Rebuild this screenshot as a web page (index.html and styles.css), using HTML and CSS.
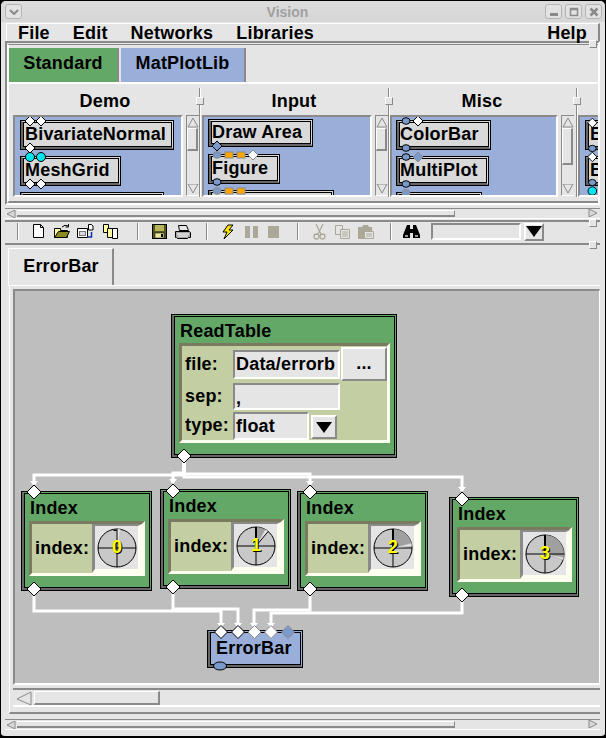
FILE: index.html
```html
<!DOCTYPE html>
<html lang="en">
<head>
    <meta charset="UTF-8">
    <title>Vision</title>
    <link rel="stylesheet" href="styles.css">
</head>
<body>
<svg class="defs" width="0" height="0">
    <defs>
        <polygon id="dia5" points="0,-5 5,0 0,5 -5,0"/>
        <polygon id="dia6" points="0,-6.5 6.5,0 0,6.5 -6.5,0"/>
        <polygon id="dia7" points="0,-7 7,0 0,7 -7,0"/>
        <ellipse id="oval" rx="4" ry="3.300"/>
        <ellipse id="oval-big" rx="6.500" ry="4"/>
        <circle id="dot" r="4.5"/>
        <rect id="sq" x="-4" y="-3" width="8" height="6"/>
        <polygon id="up" points="6,1 11,10 1,10"/>
        <polygon id="down" points="6,9 11,0 1,0"/>
    </defs>
</svg>
<div class="window">
    <div class="titlebar">
        <span class="tb-btn tb-menu"><svg width="10" height="6"><path d="M1 1l4 4 4-4" fill="none" stroke="#8a8a8a" stroke-width="2"/></svg></span>
        <span class="title">Vision</span>
        <span class="tb-btn"><svg width="10" height="8"><rect x="1" y="5" width="8" height="3" fill="#8a8a8a"/></svg></span>
        <span class="tb-btn"><svg width="10" height="10"><path d="M1.5 1.5h7v7h-7z M1 2.5h8" fill="none" stroke="#8a8a8a" stroke-width="1.5"/></svg></span>
        <span class="tb-btn"><svg width="10" height="10"><path d="M1.5 1.5l7 7m0-7l-7 7" stroke="#8a8a8a" stroke-width="2.5"/></svg></span>
    </div>
    <div class="main">
        <div class="menubar">
            <span>File</span>
            <span>Edit</span>
            <span>Networks</span>
            <span>Libraries</span>
            <span class="menu-help">Help</span>
        </div>

        <div class="pane-top">
            <div class="libbook">
                <div class="libtabs">
                    <div class="libtab tab-std">Standard</div>
                    <div class="libtab tab-mpl">MatPlotLib</div>
                </div>
                <div class="palette">
                    <div class="col col1">
                        <div class="col-head">Demo</div>
                        <div class="col-row">
                            <div class="plist plist1">
                                <div class="pnode pn-a"><div class="pn-mid"><div class="pn-in">BivariateNormal</div></div></div>
                                <div class="pnode pn-b"><div class="pn-mid"><div class="pn-in">MeshGrid</div></div></div>
                                <div class="pnode pn-c"><div class="pn-mid"><div class="pn-in"></div></div></div>
                                <svg class="ports" viewBox="15 117 166 78">
                                    <use href="#dia5" x="30" y="121" class="p-white"/>
                                    <use href="#dia5" x="41" y="121" class="p-white"/>
                                    <use href="#dia5" x="30" y="148" class="p-white"/>
                                    <use href="#dot" x="30" y="157" class="p-cyan"/>
                                    <use href="#dot" x="41" y="157" class="p-cyan"/>
                                    <use href="#dia5" x="30" y="184" class="p-white"/>
                                    <use href="#dia5" x="41" y="184" class="p-white"/>
                                </svg>
                            </div>
                            <div class="vsb">
                                <svg class="vsb-arrow" width="12" height="11"><use href="#up" class="sb-tri"/></svg>
                                <div class="vsb-thumb"></div>
                                <svg class="vsb-arrow vsb-down" width="12" height="11"><use href="#down" class="sb-tri"/></svg>
                            </div>
                        </div>
                        <div class="vsash"><span class="vsash-grip"></span></div>
                    </div>
                    <div class="col col2">
                        <div class="col-head">Input</div>
                        <div class="col-row">
                            <div class="plist plist2">
                                <div class="pnode pn-d"><div class="pn-mid"><div class="pn-in">Draw Area</div></div></div>
                                <div class="pnode pn-e"><div class="pn-mid"><div class="pn-in">Figure</div></div></div>
                                <div class="pnode pn-f"><div class="pn-mid"><div class="pn-in"></div></div></div>
                                <svg class="ports" viewBox="204 117 166 78">
                                    <use href="#dia5" x="217" y="146" class="p-blue"/>
                                    <use href="#oval" x="217" y="155" class="p-blue p-soft"/>
                                    <use href="#sq" x="229" y="155" class="p-orange p-soft"/>
                                    <use href="#sq" x="241" y="155" class="p-orange p-soft"/>
                                    <use href="#dia5" x="253" y="155" class="p-white p-soft"/>
                                    <use href="#oval" x="217" y="182" class="p-blue"/>
                                    <use href="#oval" x="217" y="191" class="p-blue p-soft"/>
                                    <use href="#sq" x="229" y="191" class="p-orange p-soft"/>
                                    <use href="#sq" x="241" y="191" class="p-orange p-soft"/>
                                </svg>
                            </div>
                            <div class="vsb">
                                <svg class="vsb-arrow" width="12" height="11"><use href="#up" class="sb-tri"/></svg>
                                <div class="vsb-thumb"></div>
                                <svg class="vsb-arrow vsb-down" width="12" height="11"><use href="#down" class="sb-tri"/></svg>
                            </div>
                        </div>
                        <div class="vsash"><span class="vsash-grip"></span></div>
                    </div>
                    <div class="col col3">
                        <div class="col-head">Misc</div>
                        <div class="col-row">
                            <div class="plist plist3">
                                <div class="pnode pn-g"><div class="pn-mid"><div class="pn-in">ColorBar</div></div></div>
                                <div class="pnode pn-h"><div class="pn-mid"><div class="pn-in">MultiPlot</div></div></div>
                                <div class="pnode pn-i"><div class="pn-mid"><div class="pn-in"></div></div></div>
                                <svg class="ports" viewBox="392 117 164 78">
                                    <use href="#oval" x="406" y="121" class="p-blue"/>
                                    <use href="#dia5" x="418" y="121" class="p-white"/>
                                    <use href="#oval" x="406" y="148" class="p-blue"/>
                                    <use href="#oval" x="406" y="157" class="p-blue"/>
                                    <use href="#dia5" x="418" y="157" class="p-blue p-soft"/>
                                    <use href="#oval" x="406" y="184" class="p-blue"/>
                                    <use href="#oval" x="406" y="193" class="p-blue p-soft"/>
                                </svg>
                            </div>
                            <div class="vsb vsb-long">
                                <svg class="vsb-arrow" width="12" height="11"><use href="#up" class="sb-tri"/></svg>
                                <div class="vsb-thumb"></div>
                                <svg class="vsb-arrow vsb-down" width="12" height="11"><use href="#down" class="sb-tri"/></svg>
                            </div>
                        </div>
                        <div class="vsash"><span class="vsash-grip"></span></div>
                    </div>
                    <div class="col col4">
                        <div class="col-head"></div>
                        <div class="col-row">
                            <div class="plist plist4">
                                <div class="pnode pn-j"><div class="pn-mid"><div class="pn-in">B</div></div></div>
                                <div class="pnode pn-k"><div class="pn-mid"><div class="pn-in">B</div></div></div>
                                <svg class="ports" viewBox="580 117 19 78">
                                    <use href="#dia5" x="593" y="121" class="p-white"/>
                                    <use href="#oval" x="593" y="148" class="p-blue"/>
                                    <use href="#dia5" x="593" y="157" class="p-white"/>
                                    <use href="#oval" x="593" y="184" class="p-blue"/>
                                    <use href="#dot" x="593" y="193" class="p-cyan"/>
                                </svg>
                            </div>
                        </div>
                    </div>
                </div>
            </div>
        </div>

        <div class="hsb hsb-top">
            <svg class="hsb-arrow" width="10" height="8"><path d="M1 4l8-4v8z" fill="#d9d9d9" stroke="#8a8a8a"/></svg>
            <div class="hsb-thumb"></div>
            <svg class="hsb-arrow hsb-end" width="10" height="8"><path d="M9 4l-8 4v-8z" fill="#d9d9d9" stroke="#8a8a8a"/></svg>
        </div>
        <div class="hsash"></div>

        <div class="toolbar">
            <span class="sep sep-first"></span>
            <svg class="tool" width="23" height="20"><path d="M6.5 2.5h7l3 3v10h-10z" fill="#fff" stroke="#000"/><path d="M13.5 2.5v3h3" fill="none" stroke="#000"/></svg>
            <svg class="tool" width="23" height="20"><path d="M4.5 15.5v-9h6v2h7v7z" fill="#ffffa0" stroke="#000"/><path d="M4.5 15.5l4-6h11l-3 6z" fill="#8a8a20" stroke="#000"/><path d="M12 5q3-3 6-1" fill="none" stroke="#000"/><path d="M18.5 2v3h-3" fill="none" stroke="#000"/></svg>
            <svg class="tool" width="23" height="20"><path d="M4.5 6.5h10v9h-10z" fill="#fff" stroke="#000"/><rect x="6.5" y="9.5" width="6" height="4" fill="#d9d9d9" stroke="#777"/><path d="M15.5 2.5h3l1.500 1.500v4h-4.500z" fill="#fff" stroke="#000"/><path d="M18.500 10v5h-4" fill="none" stroke="#1030a0" stroke-width="1.500"/></svg>
            <svg class="tool tool-wide" width="23" height="20"><path d="M4.500 2.500h5v8h-5z" fill="#ffffa0" stroke="#000"/><path d="M8.500 6.500h5v9h-5z" fill="#ffffa0" stroke="#000"/><path d="M13.500 6.500h5v10h-5z" fill="#fff" stroke="#000"/></svg>
            <span class="sep sep-a"></span>
            <svg class="tool" width="23" height="20"><rect x="4.500" y="2.500" width="14" height="14" fill="#55551c" stroke="#000"/><rect x="7" y="3" width="9" height="6" fill="#b5b560"/><rect x="7" y="11" width="9" height="5" fill="#e8e8a0" stroke="#000" stroke-width=".5"/><rect x="13" y="12" width="2" height="3" fill="#000"/></svg>
            <svg class="tool" width="23" height="20"><path d="M7.500 3.500h8l2 5h-9z" fill="#e8e8e8" stroke="#000"/><path d="M4.500 9.500h14l1 1v5h-2l-1 1h-10l-1-1h-1z" fill="#a8a8a8" stroke="#000"/><path d="M6 12h12M7 14h10" stroke="#fff"/></svg>
            <span class="sep sep-b"></span>
            <svg class="tool" width="23" height="20"><path d="M12 3h5l-4 5h4l-9 9 3-7h-4z" fill="#ffe600" stroke="#000"/></svg>
            <svg class="tool" width="23" height="20"><rect x="6" y="4" width="5" height="12" fill="#aca899"/><rect x="14" y="4" width="5" height="12" fill="#aca899"/></svg>
            <svg class="tool" width="23" height="20"><rect x="6" y="4" width="11" height="12" fill="#aca899"/></svg>
            <span class="sep sep-c"></span>
            <svg class="tool" width="23" height="20"><g fill="none" stroke="#aca899" stroke-width="1.300"><path d="M8 2l5 10M15 2l-5 10"/><circle cx="8.500" cy="14.500" r="2.500"/><circle cx="14.500" cy="14.500" r="2.500"/></g></svg>
            <svg class="tool" width="23" height="20"><g fill="#e5e5e5" stroke="#aca899"><path d="M4.500 3.500h7v9h-7z"/><path d="M9.500 7.500h9v9h-9z"/><path d="M11 10h6M11 12h6M11 14h6"/></g></svg>
            <svg class="tool" width="23" height="20"><path d="M4 5h4l1-2h5l1 2h3v12h-14z" fill="#aca899"/><path d="M10.500 9.500h9v7h-9z" fill="#e5e5e5" stroke="#aca899"/><path d="M12 12h6M12 14h6" stroke="#aca899"/></svg>
            <span class="sep sep-d"></span>
            <svg class="tool" width="23" height="20"><path d="M7 3h3v4h3v-4h3l4 10v3h-7v-5h-3v5h-7v-3z" fill="#000"/><rect x="5" y="13" width="3" height="2" fill="#9a9a9a"/><rect x="15" y="13" width="3" height="2" fill="#9a9a9a"/></svg>
            <div class="tool-entry"></div>
            <div class="arrow-btn tool-arrow"><span class="tri"></span></div>
        </div>

        <div class="nb">
            <div class="nb-tabs">
                <div class="nb-tab">ErrorBar</div>
            </div>
            <div class="nb-body">
                <div class="canvas">
                    <div class="node n-read">
                        <div class="node-mid"><div class="node-body">
                            <div class="node-title">ReadTable</div>
                            <div class="panel read-grid">
                                <span class="lbl">file:</span>
                                <div class="entry e-file">Data/errorb</div>
                                <div class="dots-btn">...</div>
                                <span class="lbl">sep:</span>
                                <div class="entry e-sep">,</div>
                                <span></span>
                                <span class="lbl">type:</span>
                                <div class="combo">
                                    <div class="entry e-type">float</div>
                                    <div class="arrow-btn"><span class="tri"></span></div>
                                </div>
                            </div>
                        </div></div>
                    </div>

                    <div class="node n-i0">
                        <div class="node-mid"><div class="node-body">
                            <div class="node-title title-index">Index</div>
                            <div class="panel index-row">
                                <span class="lbl lbl-index">index:</span>
                                <div class="dial-wrap"><div class="dial">
                                    <svg width="43" height="43"><circle cx="22" cy="22" r="19" fill="#c8c8c8" stroke="#000"/><path d="M22 22V3L25.300 3.300z" fill="#e2e2e2"/><path d="M22 3v38M3 22h38" stroke="#000"/><path d="M18.500 4.500h3" stroke="#000"/></svg>
                                    <span class="dial-num">0</span>
                                </div></div>
                            </div>
                        </div></div>
                    </div>

                    <div class="node n-i1">
                        <div class="node-mid"><div class="node-body">
                            <div class="node-title title-index">Index</div>
                            <div class="panel index-row">
                                <span class="lbl lbl-index">index:</span>
                                <div class="dial-wrap"><div class="dial">
                                    <svg width="43" height="43"><circle cx="22" cy="22" r="19" fill="#c8c8c8" stroke="#000"/><path d="M22 22V3A19 19 0 0 1 31.500 5.500z" fill="#a0a0a0"/><path d="M22 22L31.500 5.500 34.200 7.400z" fill="#e2e2e2"/><path d="M22 3v38M3 22h38" stroke="#000"/><path d="M22 3v19" stroke="#000" stroke-width="2"/><path d="M22 22L34.200 7.400" stroke="#000"/></svg>
                                    <span class="dial-num">1</span>
                                </div></div>
                            </div>
                        </div></div>
                    </div>

                    <div class="node n-i2">
                        <div class="node-mid"><div class="node-body">
                            <div class="node-title title-index">Index</div>
                            <div class="panel index-row">
                                <span class="lbl lbl-index">index:</span>
                                <div class="dial-wrap"><div class="dial">
                                    <svg width="43" height="43"><circle cx="22" cy="22" r="19" fill="#c8c8c8" stroke="#000"/><path d="M22 22V3A19 19 0 0 1 40.400 17.100L22 22z" fill="#a0a0a0"/><path d="M3 22h38M22 3v38" stroke="#000"/><path d="M22 3v19" stroke="#000" stroke-width="2"/><path d="M22 22L40.400 17.100 41 20.300z" fill="#e2e2e2" stroke="#999" stroke-width=".5"/></svg>
                                    <span class="dial-num">2</span>
                                </div></div>
                            </div>
                        </div></div>
                    </div>

                    <div class="node n-i3">
                        <div class="node-mid"><div class="node-body">
                            <div class="node-title title-index">Index</div>
                            <div class="panel index-row">
                                <span class="lbl lbl-index">index:</span>
                                <div class="dial-wrap"><div class="dial">
                                    <svg width="43" height="43"><circle cx="22" cy="22" r="19" fill="#c8c8c8" stroke="#000"/><path d="M22 22V3A19 19 0 0 1 40.700 25.300L22 22z" fill="#a0a0a0"/><path d="M3 22h38M22 3v38" stroke="#000"/><path d="M22 3v19" stroke="#000" stroke-width="2"/><path d="M22 22L40.700 25.300 40.100 27.900z" fill="#e2e2e2" stroke="#999" stroke-width=".5"/></svg>
                                    <span class="dial-num">3</span>
                                </div></div>
                            </div>
                        </div></div>
                    </div>

                    <div class="node n-err">
                        <div class="node-mid"><div class="node-body err-body">ErrorBar</div></div>
                    </div>

                    <!-- wires and ports over the nodes, page coordinates -->
                    <svg class="net" viewBox="15 291 585 393">
                        <g class="wires">
                            <path d="M184 456V475H34V485"/>
                            <path d="M184 456V473H173V483"/>
                            <path d="M184 456V474H310V485"/>
                            <path d="M184 456V477H462V491"/>
                            <path d="M34 591V611H221V626"/>
                            <path d="M173 589V609H238V626"/>
                            <path d="M310 591V610H254V626"/>
                            <path d="M462 597V613H271V626"/>
                        </g>
                        <g class="arrows">
                            <polygon points="30,481 38,481 34,486"/>
                            <polygon points="169,479 177,479 173,484"/>
                            <polygon points="306,481 314,481 310,486"/>
                            <polygon points="458,487 466,487 462,492"/>
                            <polygon points="217,623 225,623 221,628"/>
                            <polygon points="234,623 242,623 238,628"/>
                            <polygon points="250,623 258,623 254,628"/>
                            <polygon points="267,623 275,623 271,628"/>
                        </g>
                        <use href="#dia7" x="184" y="456" class="p-white"/>
                        <use href="#dia7" x="34" y="492" class="p-white"/>
                        <use href="#dia7" x="173" y="491" class="p-white"/>
                        <use href="#dia7" x="310" y="492" class="p-white"/>
                        <use href="#dia7" x="462" y="499" class="p-white"/>
                        <use href="#dia7" x="34" y="589" class="p-white"/>
                        <use href="#dia7" x="173" y="587" class="p-white"/>
                        <use href="#dia7" x="310" y="589" class="p-white"/>
                        <use href="#dia7" x="462" y="595" class="p-white"/>
                        <use href="#dia6" x="221" y="632" class="p-white"/>
                        <use href="#dia6" x="238" y="632" class="p-white"/>
                        <use href="#dia6" x="254.500" y="632" class="p-white p-soft"/>
                        <use href="#dia6" x="271" y="632" class="p-white p-soft"/>
                        <use href="#dia6" x="288" y="632" class="p-blue p-soft"/>
                        <use href="#oval-big" x="220" y="666" class="p-blue"/>
                    </svg>
                </div>
                <div class="nb-hsb">
                    <svg class="nb-hsb-arrow" width="16" height="15"><path d="M1 8L15 1V14z" fill="#e5e5e5" stroke="#8a8a8a"/></svg>
                    <div class="nb-hsb-thumb"></div>
                </div>
            </div>
        </div>

        <div class="hsb hsb-bottom">
            <svg class="hsb-arrow" width="10" height="8"><path d="M1 4l8-4v8z" fill="#d9d9d9" stroke="#8a8a8a"/></svg>
            <div class="hsb-thumb"></div>
            <svg class="hsb-arrow hsb-end" width="10" height="8"><path d="M9 4l-8 4v-8z" fill="#d9d9d9" stroke="#8a8a8a"/></svg>
        </div>

        <span class="grip grip-1"></span>
        <span class="grip grip-2"></span>
        <span class="grip grip-3"></span>
    </div>
</div>
</body>
</html>
```

FILE: styles.css
```css
body {
    margin: 0;
    font-family: "Liberation Sans", Arial, sans-serif;
    font-weight: bold;
    font-size: 18px;
    letter-spacing: .2px;
    color: #000;
    background-color: #000;
}
.defs { position: absolute; }

.window {
    box-sizing: border-box;
    width: 606px;
    height: 738px;
    border: 1px solid #000;
    border-bottom-width: 2px;
    border-radius: 6px 6px 5px 5px;
    background-color: #e5e5e5;
    overflow: hidden;
}

/* title bar */
.titlebar {
    display: flex;
    align-items: center;
    height: 21px;
    padding: 0 3px 0 4px;
    gap: 3px;
    background: linear-gradient(#dcdcdc, #d6d6d6);
}
.title {
    flex: 1;
    text-align: center;
    font-size: 14px;
    letter-spacing: 0;
    color: #a0a0a0;
    padding-left: 8px;
}
.tb-btn {
    display: flex;
    align-items: center;
    justify-content: center;
    box-sizing: border-box;
    width: 17px;
    height: 15px;
    border: 1px solid #b5b5b5;
    border-radius: 3px;
    background-color: #e2e2e2;
}

.main { position: relative; padding: 0 5px 0 4px; }

/* menu */
.menubar {
    box-sizing: border-box;
    display: flex;
    height: 18px;
    margin: 1px 0 0 1px;
    padding: 0 12px 0 0;
    border-top: 1px solid #fff;
    border-left: 1px solid #fff;
    border-right: 2px solid #8a8a8a;
    line-height: 18px;
}
.menubar span { padding: 0 12px 0 12px; margin-right: -1px; }
.menubar span:first-child { padding-left: 11px; }
.menubar .menu-help { margin-left: auto; padding: 0; }

/* library pane */
.pane-top {
    box-sizing: border-box;
    height: 164px;
    padding-top: 1px;
    border-top: 2px solid #8a8a8a;
    border-left: 2px solid #8a8a8a;
    border-right: 2px solid #fff;
    border-bottom: 2px solid #fff;
}
.libbook {
    box-sizing: border-box;
    height: 159px;
    padding-top: 3px;
    border-top: 1px solid #8a8a8a;
    border-left: 2px solid #fff;
    border-bottom: 2px solid #8a8a8a;
}
.libtabs {
    display: flex;
    gap: 2px;
    height: 34px;
    padding-left: 0;
    border-bottom: 2px solid #fff;
    margin-left: -1px;
}
.libtab {
    box-sizing: border-box;
    height: 34px;
    line-height: 31px;
    text-align: center;
    border-right: 2px solid #8a8a8a;
}
.tab-std { width: 110px; margin-left: 1px; background-color: #64a868; }
.tab-mpl { width: 125px; background-color: #99aed8; }

.palette { display: flex; height: 113px; }
.col { position: relative; box-sizing: border-box; }
.col1 { width: 191px; padding-left: 4px; }
.col2 { width: 189px; padding-left: 2px; }
.col3 { width: 188px; padding-left: 1px; }
.col4 { width: 21px; padding-left: 1px; }
.col-head {
    height: 31px;
    line-height: 35px;
    text-align: center;
    width: 184px;
}
.col-row { display: flex; height: 82px; }
.plist {
    position: relative;
    box-sizing: border-box;
    height: 82px;
    border-top: 2px solid #8a8a8a;
    border-left: 2px solid #8a8a8a;
    border-right: 2px solid #fff;
    border-bottom: 2px solid #fff;
    background-color: #99aed8;
    overflow: hidden;
}
.plist1 { width: 170px; }
.plist2 { width: 170px; }
.plist3 { width: 168px; }
.plist4 { width: 21px; border-right: none; }
.ports { position: absolute; left: 0; top: 0; width: 100%; height: 78px; }
.ports use, .net use { stroke: #000; stroke-width: 1; }
.p-white { fill: #fff; }
.p-cyan { fill: #00e5ee; }
.p-blue { fill: #7b9acc; }
.p-orange { fill: #ffa500; }
.net use.p-soft, .ports use.p-soft { stroke: #8a8a8a; }

.pnode {
    position: absolute;
    box-sizing: border-box;
    height: 30px;
    border: 1px solid #000;
    white-space: nowrap;
}
.pn-mid {
    box-sizing: border-box;
    height: 28px;
    border-style: solid;
    border-width: 1px 1px 2px 2px;
    border-color: #d9d9d9 #d9d9d9 #666 #666;
}
.pn-in {
    box-sizing: border-box;
    height: 25px;
    border: 1px solid #000;
    padding-left: 1px;
    line-height: 22px;
    background-color: #d9d9d9;
    overflow: hidden;
}
.plist2 .pn-in, .plist3 .pn-in { padding-left: 0; }
.pn-a { left: 5px; top: 3px; width: 154px; }
.pn-b { left: 5px; top: 39px; width: 101px; }
.pn-c { left: 5px; top: 75px; width: 144px; }
.pn-d { left: 4px; top: 2px; width: 105px; height: 28px; }
.pn-d .pn-mid { height: 26px; }
.pn-d .pn-in { height: 23px; line-height: 20px; }
.pn-e { left: 4px; top: 37px; width: 72px; }
.pn-f { left: 4px; top: 73px; width: 126px; }
.pn-g { left: 4px; top: 3px; width: 95px; }
.pn-h { left: 4px; top: 39px; width: 93px; }
.pn-i { left: 4px; top: 75px; width: 86px; }
.pn-j { left: 5px; top: 3px; width: 60px; }
.pn-k { left: 5px; top: 39px; width: 60px; }

/* vertical scrollbar of a palette column */
.vsb {
    box-sizing: border-box;
    width: 13px;
    height: 81px;
    margin-left: 3px;
    padding-top: 1px;
    border-top: 1px solid #8a8a8a;
    border-left: 1px solid #8a8a8a;
    border-bottom: 1px solid #fff;
}
.vsb-arrow { display: block; }
.vsb-thumb {
    box-sizing: border-box;
    width: 11px;
    height: 23px;
    border-right: 2px solid #8a8a8a;
    border-bottom: 2px solid #8a8a8a;
    border-top: 1px solid #fff;
    border-left: 1px solid #fff;
}
.vsb-long .vsb-thumb { height: 37px; }
.vsb-down { margin-top: 33px; }
.vsb-long .vsb-down { margin-top: 19px; }
.sb-tri { fill: #e5e5e5; stroke: #8a8a8a; }

.vsash {
    position: absolute;
    right: -1px;
    top: 4px;
    bottom: 0;
    width: 0;
    border-left: 1px solid #8a8a8a;
    border-right: 1px solid #fff;
}
.vsash-grip {
    position: absolute;
    left: -4px;
    top: 9px;
    box-sizing: border-box;
    width: 8px;
    height: 8px;
    background-color: #e5e5e5;
    border: 1px solid #8a8a8a;
    border-top-color: #fff;
    border-left-color: #fff;
}

/* horizontal scrollbars of the panes */
.hsb {
    position: relative;
    box-sizing: border-box;
    display: flex;
    align-items: center;
    height: 11px;
    margin-top: 3px;
    border-top: 1px solid #8a8a8a;
    border-bottom: 1px solid #fff;
}
.hsb-arrow { margin-left: 1px; }
.hsb-end { position: absolute; right: 2px; top: 0; }
.hsb-thumb {
    box-sizing: border-box;
    width: 438px;
    height: 7px;
    margin-left: 1px;
    border-bottom: 2px solid #8a8a8a;
    border-right: 1px solid #8a8a8a;
    border-top: 1px solid #fff;
}
.hsb-bottom { margin-top: 5px; }
.hsash { height: 3px; box-sizing: border-box; border-bottom: 2px solid #8a8a8a; }

.grip {
    position: absolute;
    left: 588px;
    box-sizing: border-box;
    width: 8px;
    height: 8px;
    background-color: #e5e5e5;
    border: 1px solid #8a8a8a;
    border-top-color: #fff;
    border-left-color: #fff;
}
.grip-1 { top: 17px; }
.grip-2 { top: 196px; }
.grip-3 { top: 218px; }

/* toolbar */
.toolbar {
    box-sizing: border-box;
    display: flex;
    align-items: center;
    height: 23px;
    padding: 0 0 2px 12px;
    border-bottom: 2px solid #8a8a8a;
}
.tool { display: block; flex: none; }
.tool-wide { margin-left: 3px; }
.sep {
    flex: none;
    width: 0;
    height: 17px;
    border-left: 1px solid #8a8a8a;
    border-right: 1px solid #fff;
}
.sep-first { margin-right: 8px; }
.sep-a { margin: 0 9px 0 15px; }
.sep-b { margin: 0 8px 0 12px; }
.sep-c { margin: 0 9px 0 12px; }
.sep-d { margin: 0 8px 0 13px; }
.tool-entry {
    box-sizing: border-box;
    width: 90px;
    height: 17px;
    margin-left: 8px;
    border-top: 2px solid #8a8a8a;
    border-left: 2px solid #8a8a8a;
    border-bottom: 2px solid #fff;
    border-right: 2px solid #fff;
}
.arrow-btn {
    box-sizing: border-box;
    display: flex;
    align-items: center;
    justify-content: center;
    width: 26px;
    height: 24px;
    background-color: #e5e5e5;
    border-top: 2px solid #fff;
    border-left: 2px solid #fff;
    border-right: 2px solid #8a8a8a;
    border-bottom: 2px solid #8a8a8a;
}
.tri {
    width: 0;
    height: 0;
    border-left: 8px solid transparent;
    border-right: 8px solid transparent;
    border-top: 11px solid #000;
}
.tool-arrow { width: 20px; height: 18px; margin-left: 3px; }

/* network notebook */
.nb { box-sizing: border-box; height: 469px; padding: 3px 0 0 3px; }
.nb-tabs { height: 37px; position: relative; border-bottom: 1px solid #fff; }
.nb-tab {
    box-sizing: border-box;
    width: 106px;
    height: 37px;
    line-height: 34px;
    padding-left: 1px;
    text-align: center;
    border-top: 1px solid #fff;
    border-left: 1px solid #fff;
    border-right: 2px solid #8a8a8a;
    background-color: #e5e5e5;
    margin-bottom: -1px;
    position: relative;
}
.nb-body {
    box-sizing: border-box;
    height: 428px;
    margin-left: 1px;
    padding: 3px 0 0 3px;
    border-left: 1px solid #fff;
    border-bottom: 2px solid #8a8a8a;
}
.canvas {
    position: relative;
    box-sizing: border-box;
    width: 587px;
    height: 396px;
    background-color: #bebebe;
    border-top: 2px solid #8a8a8a;
    border-left: 2px solid #8a8a8a;
    border-bottom: 2px solid #fff;
    border-right: 1px solid #fff;
    overflow: hidden;
}
.net { position: absolute; left: 0; top: 0; width: 585px; height: 393px; }
.wires path { fill: none; stroke: #fff; stroke-width: 3; }
.arrows polygon { fill: #fff; }

.nb-hsb {
    display: flex;
    align-items: flex-start;
    box-sizing: border-box;
    width: 587px;
    height: 19px;
    margin-top: 3px;
    padding: 1px 0 0 3px;
    border-top: 2px solid #8a8a8a;
    border-bottom: 2px solid #fff;
}
.nb-hsb-arrow { flex: none; }
.nb-hsb-thumb {
    box-sizing: border-box;
    width: 126px;
    height: 14px;
    margin-left: 2px;
    border-top: 1px solid #fff;
    border-left: 1px solid #fff;
    border-right: 2px solid #8a8a8a;
    border-bottom: 2px solid #8a8a8a;
}

/* nodes on the canvas */
.node {
    position: absolute;
    box-sizing: border-box;
    border: 1px solid #000;
}
.node-mid {
    box-sizing: border-box;
    height: 100%;
    border-style: solid;
    border-width: 1px 1px 2px 2px;
    border-color: #64a868 #64a868 #666 #666;
}
.node-body {
    box-sizing: border-box;
    height: 100%;
    padding: 0 4px;
    border: 1px solid #000;
    background-color: #64a868;
}
.node-title { height: 26px; line-height: 29px; padding-left: 1px; }
.title-index { height: 27px; line-height: 29px; }
.n-read { left: 156px; top: 23px; width: 226px; height: 144px; }
.n-i0 { left: 6px; top: 200px; width: 131px; height: 100px; }
.n-i1 { left: 145px; top: 198px; width: 131px; height: 100px; }
.n-i2 { left: 282px; top: 200px; width: 131px; height: 100px; }
.n-i3 { left: 434px; top: 206px; width: 130px; height: 100px; }
.n-err { left: 192px; top: 339px; width: 96px; height: 38px; }
.n-err .node-mid { border-color: #99aed8 #99aed8 #666 #666; }
.err-body {
    padding-left: 5px;
    line-height: 30px;
    background-color: #99aed8;
}

.panel {
    box-sizing: border-box;
    border-style: solid;
    border-width: 3px;
    border-color: #7a7a60 #fffff0 #fffff0 #7a7a60;
    background-color: #c3cfa3;
}
.read-grid {
    display: grid;
    grid-template-columns: 51px 107px 1fr;
    grid-template-rows: 36px 29px 29px;
    height: 100px;
}
.lbl { padding-left: 3px; align-self: center; }
.entry {
    box-sizing: border-box;
    border-style: solid;
    border-width: 2px;
    border-color: #8a8a8a #fff #fff #8a8a8a;
    padding-left: 1px;
    background-color: #e5e5e5;
    white-space: nowrap;
    overflow: hidden;
}
.e-file { height: 29px; margin-top: 4px; line-height: 24px; }
.e-sep { height: 27px; margin-top: 1px; line-height: 26px; }
.e-type { flex: none; width: 76px; height: 28px; line-height: 24px; }
.dots-btn {
    box-sizing: border-box;
    height: 34px;
    margin: 1px 0 0 1px;
    line-height: 28px;
    text-align: center;
    background-color: #e5e5e5;
    border-top: 2px solid #fff;
    border-left: 2px solid #fff;
    border-right: 2px solid #8a8a8a;
    border-bottom: 2px solid #8a8a8a;
}
.combo { display: flex; align-items: flex-start; margin-top: 1px; width: 106px; }
.combo .arrow-btn { margin: 3px 0 0 2px; }

.index-row { display: flex; height: 55px; }
.lbl-index { flex: none; width: 60px; padding-left: 3px; box-sizing: border-box; }
.dial-wrap {
    box-sizing: border-box;
    width: 50px;
    height: 49px;
    border-style: solid;
    border-width: 2px 4px 4px 3px;
    border-color: #8a8a8a #fffff0 #fffff0 #8a8a8a;
}
.dial {
    position: relative;
    display: flex;
    align-items: center;
    justify-content: center;
    width: 43px;
    height: 43px;
    background-color: #e5e5e5;
}
.dial svg { position: absolute; left: 0; top: 0; }
.dial-num {
    position: relative;
    color: #ffff00;
    text-shadow: 1px 1px 0 #000;
    margin-left: 1px;
}
```
